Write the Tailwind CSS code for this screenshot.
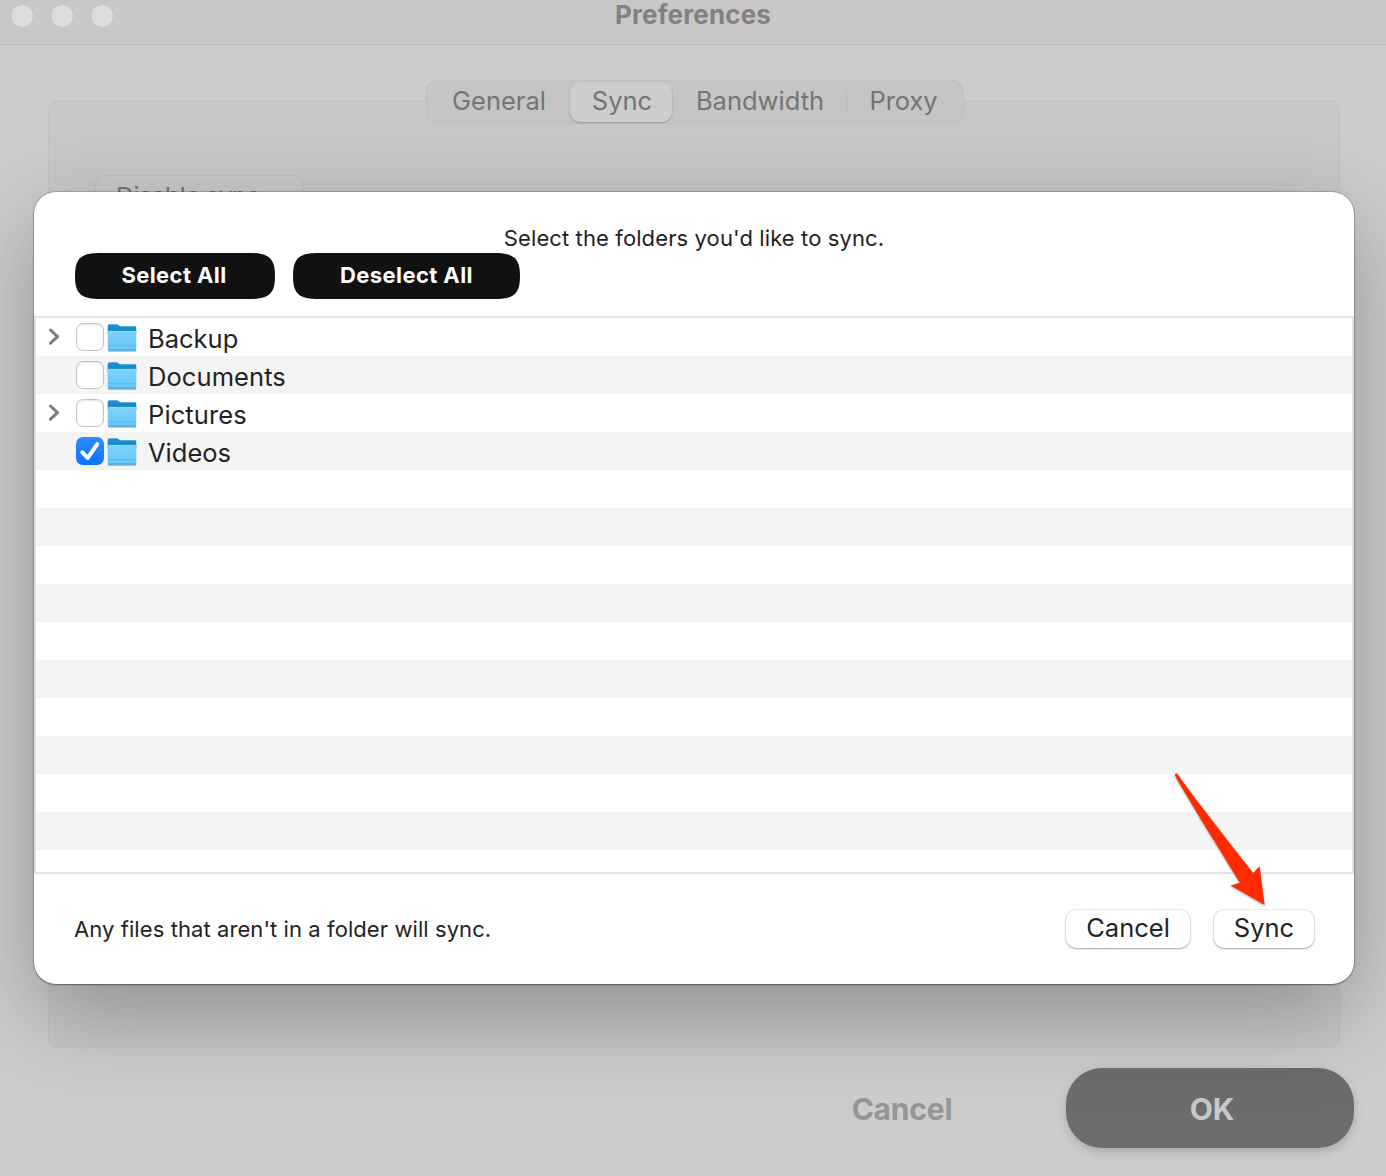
<!DOCTYPE html>
<html lang="en">
<head>
<meta charset="utf-8">
<title>Preferences</title>
<script src="https://cdn.jsdelivr.net/npm/@tailwindcss/browser@4"></script>
</head>
<body class="overflow-hidden font-['Inter',sans-serif]">
<svg class="absolute size-0">
  <defs>
    <linearGradient id="front" x1="0" y1="0" x2="0" y2="1"><stop offset="0" stop-color="#7fd2fb"/><stop offset="1" stop-color="#66c6f8"/></linearGradient>
    <linearGradient id="back" x1="0" y1="0" x2="0" y2="1"><stop offset="0" stop-color="#1f97d4"/><stop offset="1" stop-color="#0f7dbf"/></linearGradient>
    <symbol id="folder" viewBox="0 0 32 32">
      <rect x="2" y="26" width="28" height="3.8" rx="1" fill="#000" fill-opacity=".3"/>
      <path d="M1.7 3.8Q1.7 2.2 3.3 2.2H10.6Q11.8 2.2 12.6 3L13.4 3.7Q14 4.2 15 4.2H28.9Q30.3 4.2 30.3 5.6V12H1.7Z" fill="url(#back)"/>
      <path d="M1.7 10.5Q1.7 9 3.2 9H28.8Q30.3 9 30.3 10.5V27Q30.3 28.5 28.8 28.5H3.2Q1.7 28.5 1.7 27Z" fill="url(#front)"/>
      <path d="M2.3 9.3H29.7" stroke="#9adcfc" stroke-width=".7"/>
      <path d="M2 23.6H30" stroke="#58b4e6" stroke-width=".8"/>
      <path d="M2.3 28H29.7" stroke="#47a2d8" stroke-width="1"/>
    </symbol>
    <symbol id="chevron" viewBox="0 0 12 18"><path d="M2.5 2L9.5 8.6L2.5 15.2" fill="none" stroke="#7e7e7e" stroke-width="3" stroke-linecap="round" stroke-linejoin="round"/></symbol>
  </defs>
</svg>
<div class="relative flex h-[1176px] w-[1386px] flex-col bg-[#cccccc]">
  <header class="grid h-[45px] shrink-0 grid-cols-3 border-b border-[#bbb9ba] bg-[#cac7c8]">
    <div class="flex gap-[18px] pt-[5px] pl-[11px]">
      <span class="size-[22px] rounded-full bg-[#dfdddb] shadow-[0_0_1px_#aaa]"></span>
      <span class="size-[22px] rounded-full bg-[#dfdddb] shadow-[0_0_1px_#aaa]"></span>
      <span class="size-[22px] rounded-full bg-[#dfdddb] shadow-[0_0_1px_#aaa]"></span>
    </div>
    <h1 class="text-center text-[26px] leading-[30px] font-bold tracking-[.15px] text-[#838182]">Preferences</h1>
  </header>

  <main class="mt-[55px] mr-[46px] ml-[48px] h-[948px] shrink-0 rounded-[10px] border border-[#c2c2c2] bg-[#c7c7c7]">
    <nav class="mt-[-21px] ml-[377px] flex h-[44px] w-[538px] items-center rounded-[11px] border border-[#c0c0c0] bg-[#c5c5c5] text-[25.5px] leading-[38px] text-[#747474]">
      <span class="h-[40px] w-[143px] pl-px text-center">General</span>
      <span class="h-[40px] w-[102px] rounded-[10px] bg-[#cdcdcd] pl-[2px] text-center shadow-[0_1px_2px_#999]">Sync</span>
      <span class="h-[40px] w-[174px] pl-[2px] text-center">Bandwidth</span>
      <span class="h-[24px] w-px bg-[#b8b8b8]"></span>
      <span class="h-[40px] w-[113px] text-center tracking-[-.1px]">Proxy</span>
    </nav>
    <button class="mt-[51px] ml-[46px] flex h-[42px] w-[208px] rounded-[9px] border border-[#bfbfbf] bg-[#c9c9c9] pt-[5px] pl-[20px] text-[24.5px] leading-[30px] tracking-[-.3px] text-[#747474]">Disable sync</button>
  </main>

  <footer class="flex h-[128px] shrink-0 items-start justify-end gap-[58px] pt-[20px] pr-[32px] text-[30px] font-bold">
    <button class="h-[80px] w-[212px] pt-[2px] tracking-[-.2px] text-[#959595]">Cancel</button>
    <button class="h-[80px] w-[288px] rounded-[36px] bg-[#6c6c6c] pt-[2px] pl-[4px] text-[#c8c8c8] shadow-[0_4px_10px_rgba(0,0,0,.17)]">OK</button>
  </footer>

  <section class="absolute top-[192px] left-[34px] flex h-[792px] w-[1320px] flex-col rounded-[22px] bg-white text-[#232323] shadow-[0_0_0_1px_rgba(0,0,0,.16),0_1px_2px_rgba(0,0,0,.3),0_30px_90px_rgba(0,0,0,.28)]">
    <p class="pt-[31px] text-center text-[22px] leading-[30px] tracking-[.11px]">Select the folders you'd like to sync.</p>
    <div class="flex gap-[18px] pl-[41px] text-[22px] leading-[45px] font-bold tracking-[.4px] text-white">
      <button class="grid h-[46px] w-[200px]">
        <svg viewBox="0 0 200 46" class="col-start-1 row-start-1 h-[46px] w-[200px]"><path d="M0 23C0 5 6 0 26 0H174C194 0 200 5 200 23C200 41 194 46 174 46H26C6 46 0 41 0 23Z" fill="#111"/></svg>
        <span class="z-10 col-start-1 row-start-1 pr-[2px]">Select All</span>
      </button>
      <button class="grid h-[46px] w-[227px]">
        <svg viewBox="0 0 227 46" class="col-start-1 row-start-1 h-[46px] w-[227px]"><path d="M0 23C0 5 6 0 26 0H201C221 0 227 5 227 23C227 41 221 46 201 46H26C6 46 0 41 0 23Z" fill="#111"/></svg>
        <span class="z-10 col-start-1 row-start-1">Deselect All</span>
      </button>
    </div>
    <div class="mt-[17px] h-[558px] overflow-hidden border-2 border-[#e3e3e3] bg-[repeating-linear-gradient(to_bottom,#fff_0,#fff_38px,#f4f4f4_38px,#f4f4f4_76px)] text-[25.5px] leading-[42px]">
      <div class="flex h-[38px] items-start">
        <svg class="mt-[10px] ml-[12px] h-[18px] w-[12px]"><use href="#chevron"/></svg>
        <span class="mt-[5px] ml-[16px] size-[28px] rounded-[7px] border border-[#c4c4c4] bg-white shadow-[inset_0_1px_2px_rgba(0,0,0,.12)]"></span>
        <svg class="mt-[4px] ml-[2px] size-[32px]"><use href="#folder"/></svg>
        <span class="ml-[10px]">Backup</span>
      </div>
      <div class="flex h-[38px] items-start">
        <span class="mt-[5px] ml-[40px] size-[28px] rounded-[7px] border border-[#c4c4c4] bg-white shadow-[inset_0_1px_2px_rgba(0,0,0,.12)]"></span>
        <svg class="mt-[4px] ml-[2px] size-[32px]"><use href="#folder"/></svg>
        <span class="ml-[10px] tracking-[.08px]">Documents</span>
      </div>
      <div class="flex h-[38px] items-start">
        <svg class="mt-[10px] ml-[12px] h-[18px] w-[12px]"><use href="#chevron"/></svg>
        <span class="mt-[5px] ml-[16px] size-[28px] rounded-[7px] border border-[#c4c4c4] bg-white shadow-[inset_0_1px_2px_rgba(0,0,0,.12)]"></span>
        <svg class="mt-[4px] ml-[2px] size-[32px]"><use href="#folder"/></svg>
        <span class="ml-[10px] tracking-[.1px]">Pictures</span>
      </div>
      <div class="flex h-[38px] items-start">
        <span class="mt-[5px] ml-[40px] size-[28px] rounded-[7px] bg-linear-to-b from-[#2b8bff] to-[#0a74fb]">
          <svg viewBox="0 0 28 28" class="size-[28px]"><path d="M6.3 15.4L11.6 21L21.3 7.2" fill="none" stroke="#fff" stroke-width="4" stroke-linecap="round" stroke-linejoin="round"/></svg>
        </span>
        <svg class="mt-[4px] ml-[2px] size-[32px]"><use href="#folder"/></svg>
        <span class="ml-[10px]">Videos</span>
      </div>
    </div>
    <div class="flex items-start pt-[36px] pr-[40px] pl-[40px]">
      <p class="mt-[4px] flex-1 text-[22px] leading-[30px] tracking-[.08px]">Any files that aren't in a folder will sync.</p>
      <button class="h-[38px] w-[124px] rounded-[10px] pb-[3px] text-[25.5px] leading-[35px] shadow-[0_0_1px_1px_rgba(0,0,0,.07),0_1px_2px_rgba(0,0,0,.3)]">Cancel</button>
      <button class="ml-[24px] h-[38px] w-[100px] rounded-[10px] pb-[3px] text-[25.5px] leading-[35px] shadow-[0_0_1px_1px_rgba(0,0,0,.07),0_1px_2px_rgba(0,0,0,.3)]">Sync</button>
    </div>
  </section>

  <svg class="absolute top-[765px] left-[1165px] h-[150px] w-[110px] drop-shadow-[0_1px_1px_rgba(0,0,0,.35)]" viewBox="1165 765 110 150">
    <path d="M1177.3 773.8Q1175.4 772.4 1174.9 775.2C1178 782 1207 829 1240 882.8L1230.6 885.5L1264.6 905L1259.6 866.2L1253.2 873C1229 842 1195 799 1177.3 773.8Z" fill="#ff2b00"/>
  </svg>
</div>
</body>
</html>
